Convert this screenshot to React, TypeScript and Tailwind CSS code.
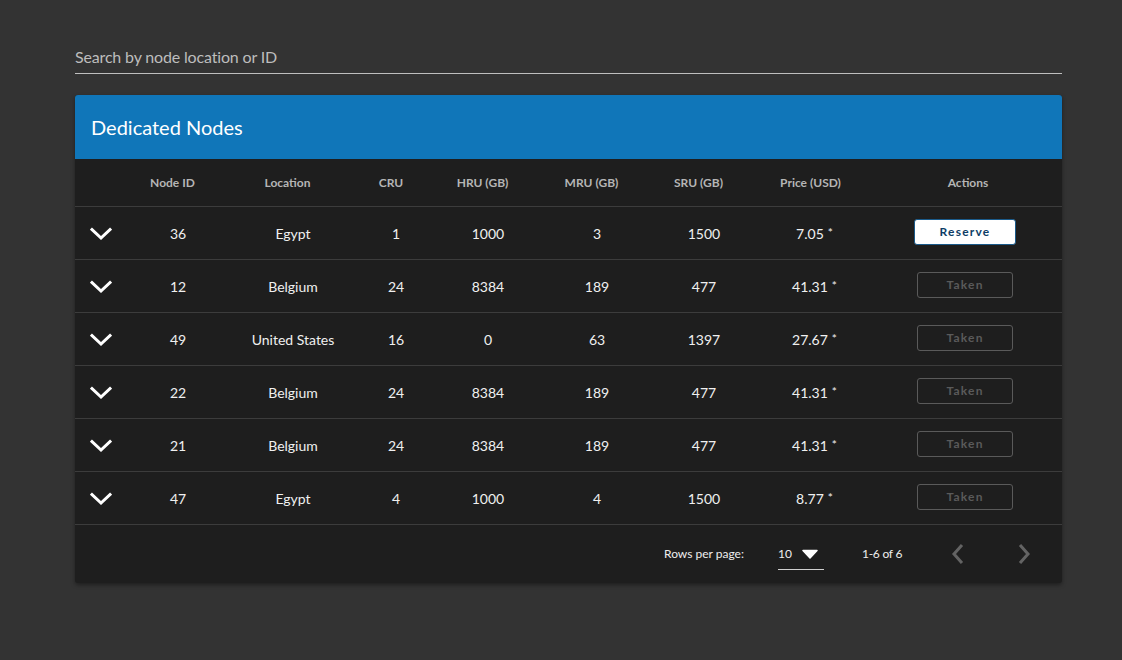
const cols = "grid grid-cols-[52px_102px_128px_78px_106px_112px_102px_116px_1fr] items-center";

const headers = [
  { t: "Node ID", c: "pr-[11px]" },
  { t: "Location", c: "pr-[11px]" },
  { t: "CRU", c: "pr-[10px]" },
  { t: "HRU (GB)", c: "pr-[11px]" },
  { t: "MRU (GB)", c: "pr-[11px]" },
  { t: "SRU (GB)", c: "pr-[11px]" },
  { t: "Price (USD)", c: "pr-[5px]" },
  { t: "Actions", c: "pl-[3px]" },
];

const rows = [
  { id: 36, loc: "Egypt", cru: 1, hru: 1000, mru: 3, sru: 1500, price: "7.05", free: true },
  { id: 12, loc: "Belgium", cru: 24, hru: 8384, mru: 189, sru: 477, price: "41.31", free: false },
  { id: 49, loc: "United States", cru: 16, hru: 0, mru: 63, sru: 1397, price: "27.67", free: false },
  { id: 22, loc: "Belgium", cru: 24, hru: 8384, mru: 189, sru: 477, price: "41.31", free: false },
  { id: 21, loc: "Belgium", cru: 24, hru: 8384, mru: 189, sru: 477, price: "41.31", free: false },
  { id: 47, loc: "Egypt", cru: 4, hru: 1000, mru: 4, sru: 1500, price: "8.77", free: false },
];

function Chevron() {
  return (
    <svg width="22" height="14" viewBox="0 0 22 14" fill="none">
      <path d="M2 2.5 L11 11 L20 2.5" stroke="white" strokeWidth="3" strokeLinecap="square" />
    </svg>
  );
}

export default function App() {
  return (
    <div className="min-h-screen w-full bg-[#333333] font-['Lato',sans-serif] pt-[40px] px-[75px]">
      <div className="w-[987px]">
        <div className="h-[34px] flex items-center border-b border-[#bfbfbf] text-[16px] text-[#bdbdbd] tracking-[-0.01em]">
          Search by node location or ID
        </div>

        <div className="mt-[21px] bg-[#1e1e1e] rounded-[3px] shadow-[0_2px_4px_rgba(0,0,0,0.4)] overflow-hidden">
          <div className="h-[64px] bg-[#1076b9] flex items-center px-4 text-[20px] text-white">
            Dedicated Nodes
          </div>

          <div className={`${cols} h-[48px] border-b border-[#3c3c3c]`}>
            <div />
            {headers.map((h) => (
              <div key={h.t} className={`text-center text-[12px] font-bold text-[#b5b5b5] ${h.c}`}>
                {h.t}
              </div>
            ))}
          </div>

          {rows.map((r) => (
            <div key={r.id} className={`${cols} h-[53px] border-b border-[#3c3c3c] text-[14px] text-[#f0f0f0]`}>
              <div className="flex justify-center pt-[1px]">
                <Chevron />
              </div>
              <div className="text-center">{r.id}</div>
              <div className="text-center">{r.loc}</div>
              <div className="text-center">{r.cru}</div>
              <div className="text-center">{r.hru}</div>
              <div className="text-center">{r.mru}</div>
              <div className="text-center">{r.sru}</div>
              <div className="text-center pl-[3px]">
                {r.price}
                <span className="text-[12px] ml-[4px] relative top-[-2px]">*</span>
              </div>
              <div className="flex justify-center pr-[3px] pb-[2px]">
                {r.free ? (
                  <div className="w-[102px] h-[26px] bg-white rounded-[3px] border border-[#1a5a8a] flex items-center justify-center text-[12px] font-bold tracking-[0.1em] text-[#0e3d66]">
                    Reserve
                  </div>
                ) : (
                  <div className="w-[96px] h-[26px] rounded-[3px] border border-[#5a5a5a] flex items-center justify-center text-[12px] font-bold tracking-[0.1em] text-[#5a5a5a]">
                    Taken
                  </div>
                )}
              </div>
            </div>
          ))}

          <div className="h-[58px] flex items-center text-[12px] text-[#eeeeee]">
            <div className="ml-[589px]">Rows per page:</div>
            <div className="ml-[34px] w-[46px] h-[32px] flex items-center border-b border-[#d0d0d0] pt-[1px]">
              <span>10</span>
              <svg className="ml-[10px]" width="16" height="10" viewBox="0 0 16 10">
                <path d="M1 1.5 H15 L8 9 Z" fill="white" stroke="white" strokeWidth="1.5" strokeLinejoin="round" />
              </svg>
            </div>
            <div className="ml-[38px] tracking-[-0.02em]">1-6 of 6</div>
            <svg className="ml-[48px]" width="16" height="24" viewBox="0 0 16 24" fill="none">
              <path d="M12 3 L4 12 L12 21" stroke="#636363" strokeWidth="3" />
            </svg>
            <svg className="ml-[50px]" width="16" height="24" viewBox="0 0 16 24" fill="none">
              <path d="M4 3 L12 12 L4 21" stroke="#636363" strokeWidth="3" />
            </svg>
          </div>
        </div>
      </div>
    </div>
  );
}
